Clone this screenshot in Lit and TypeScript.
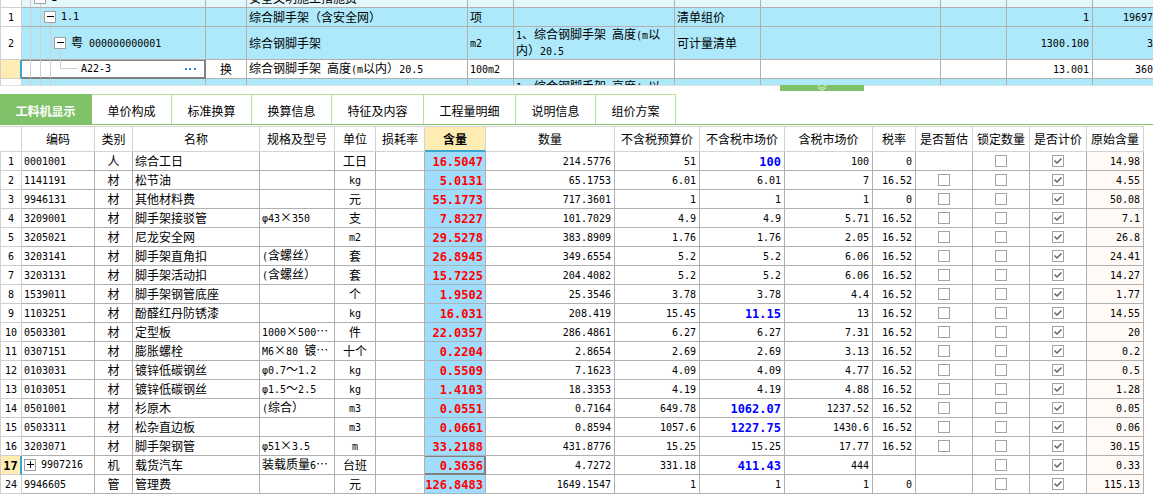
import { LitElement, html, css, svg, nothing } from "lit";
import { customElement } from "lit/decorators.js";

interface Item {
  no: string; code: string; kind: string; name: string; spec: string; unit: string;
  usage: string; qty: string; budget: string; market: string; taxed: string; rate: string; origin: string;
}

/* One line per resource; a market price marked with * has been adjusted by hand. */
const raw = `1|0001001|人|综合工日||工日|16.5047|214.5776|51|*100|100|0|14.98
2|1141191|材|松节油||kg|5.0131|65.1753|6.01|6.01|7|16.52|4.55
3|9946131|材|其他材料费||元|55.1773|717.3601|1|1|1|0|50.08
4|3209001|材|脚手架接驳管|φ43×350|支|7.8227|101.7029|4.9|4.9|5.71|16.52|7.1
5|3205021|材|尼龙安全网||m2|29.5278|383.8909|1.76|1.76|2.05|16.52|26.8
6|3203141|材|脚手架直角扣|(含螺丝）|套|26.8945|349.6554|5.2|5.2|6.06|16.52|24.41
7|3203131|材|脚手架活动扣|(含螺丝）|套|15.7225|204.4082|5.2|5.2|6.06|16.52|14.27
8|1539011|材|脚手架钢管底座||个|1.9502|25.3546|3.78|3.78|4.4|16.52|1.77
9|1103251|材|酚醛红丹防锈漆||kg|16.031|208.419|15.45|*11.15|13|16.52|14.55
10|0503301|材|定型板|1000×500⋯|件|22.0357|286.4861|6.27|6.27|7.31|16.52|20
11|0307151|材|膨胀螺栓|M6×80 镀⋯|十个|0.2204|2.8654|2.69|2.69|3.13|16.52|0.2
12|0103031|材|镀锌低碳钢丝|φ0.7～1.2|kg|0.5509|7.1623|4.09|4.09|4.77|16.52|0.5
13|0103051|材|镀锌低碳钢丝|φ1.5～2.5|kg|1.4103|18.3353|4.19|4.19|4.88|16.52|1.28
14|0501001|材|杉原木|(综合）|m3|0.0551|0.7164|649.78|*1062.07|1237.52|16.52|0.05
15|0503311|材|松杂直边板||m3|0.0661|0.8594|1057.6|*1227.75|1430.6|16.52|0.06
16|3203071|材|脚手架钢管|φ51×3.5|m|33.2188|431.8776|15.25|15.25|17.77|16.52|30.15
17|9907216|机|载货汽车|装载质量6⋯|台班|0.3636|4.7272|331.18|*411.43|444||0.33
24|9946605|管|管理费||元|126.8483|1649.1547|1|1|1|0|115.13`;

const items: Item[] = raw.split("\n").map((line) => {
  const [no, code, kind, name, spec, unit, usage, qty, budget, market, taxed, rate, origin] = line.split("|");
  return { no, code, kind, name, spec, unit, usage, qty, budget, market, taxed, rate, origin };
});

const columns: [string, string][] = [
  ["", "w22"], ["编码", "w73"], ["类别", "w38"], ["名称", "w127"], ["规格及型号", "w75"], ["单位", "w41"],
  ["损耗率", "w49"], ["含量", "w61"], ["数量", ""], ["不含税预算价", "w85"], ["不含税市场价", "w85"],
  ["含税市场价", "w88"], ["税率", "w43"], ["是否暂估", "w57"], ["锁定数量", "w57"], ["是否计价", "w57"], ["原始含量", "w57"],
];

const tabs = ["工料机显示", "单价构成", "标准换算", "换算信息", "特征及内容", "工程量明细", "说明信息", "组价方案"];

/** Latin letters and digits are set in the narrow monospace face, Chinese in the UI face. */
const mixed = (text: string) =>
  text.split(/([\x20-\x7eφ]+)/).filter(Boolean).map((part) =>
    /^[\x20-\x7eφ]/.test(part) ? html`<span class="latin">${part}</span>` : part);

const toggle = (open: boolean, label: string) => html`<button class="toggle" aria-label=${label}>
  <svg width="12" height="12" viewBox="0 0 12 12" shape-rendering="crispEdges" aria-hidden="true">
    <rect x="0.5" y="0.5" width="11" height="11" fill="#fff" stroke="#a0a0a0"/>
    <path d="M3 5.5h7" stroke="#000"/>${open ? nothing : svg`<path d="M6.5 2v7" stroke="#000"/>`}
  </svg></button>`;

/** Tree guide lines; the last one may run below the toggle that follows. */
const guides = (width: number, height: number, d: string) => html`<svg class="guides" width=${width} height=${height}
  fill="none" stroke="#cfcfcf" shape-rendering="crispEdges" aria-hidden="true"><path d=${d}/></svg>`;

@customElement("app-root")
export class AppRoot extends LitElement {
  static styles = css`
    :host {
      display: block;
      background: #fff;
      color: #000;
      font: 12px/14px "Noto Sans CJK SC", sans-serif;
    }
    * { box-sizing: border-box; }
    .latin { font-family: "DejaVu Sans Mono", monospace; font-size: 10px; white-space: pre-wrap; }
    table { border-collapse: separate; border-spacing: 0; table-layout: fixed; }
    td, th {
      padding: 0 2px;
      font-weight: 400;
      text-align: left;
      white-space: nowrap;
      overflow: hidden;
      border-right: 1px solid #b0b0b0;
      border-bottom: 1px solid #b0b0b0;
    }
    .center { text-align: center; }
    button { font: inherit; color: inherit; border: 0; padding: 0; background: none; }
    .toggle { display: inline-flex; flex: none; }
    .focus {
      border-color: #808080;
      box-shadow: inset -1px -1px #808080, inset 0 1px #808080;
    }

    .w22 { width: 22px; }
    .w38 { width: 38px; }
    .w41 { width: 41px; }
    .w43 { width: 43px; }
    .w46 { width: 46px; }
    .w49 { width: 49px; }
    .w57 { width: 57px; }
    .w60 { width: 60px; }
    .w61 { width: 61px; }
    .w66 { width: 66px; }
    .w73 { width: 73px; }
    .w75 { width: 75px; }
    .w85 { width: 85px; }
    .w86 { width: 86px; }
    .w88 { width: 88px; }
    .w127 { width: 127px; }
    .w161 { width: 161px; }
    .w184 { width: 184px; }
    .w221 { width: 221px; }

    .bill-pane { height: 86px; overflow: hidden; border-bottom: 1px solid #e0e0e0; }
    .bill { width: 100%; margin-top: -11px; }
    .bill tr { background: #ade9fb; }
    .bill .part { background: #e4f7fc; }
    .bill .norm { background: #fff; }
    .right { text-align: right; padding-right: 3px; }
    .bill td:last-child { border-right: 0; padding-right: 0; }
    td.rowno {
      padding: 0;
      background: #fff;
      text-align: center;
      border-left: 1px solid #d0d0d0;
      border-right-color: #d0d0d0;
      border-bottom-color: #d0d0d0;
    }
    td.current {
      background: #ffecb3;
      border-right: 2px solid #3aa6d0;
    }
    td.tree { padding: 0; }
    .node { display: flex; align-items: center; height: 18px; }
    .node.tall { height: 32px; }
    .guides { display: block; flex: none; overflow: visible; }
    .node .toggle { position: relative; margin-right: 5px; }
    .more { margin-left: auto; margin-right: 8px; display: flex; }
    td.wrap { white-space: normal; }

    .splitter { display: grid; grid-template-columns: 780fr 84px 289fr; height: 8px; }
    .splitter button {
      grid-column: 2;
      height: 6px;
      margin-top: -1px;
      background: #80c269;
      display: flex;
      justify-content: center;
    }

    .tabs { display: flex; border-bottom: 1px solid #80c269; }
    .tab {
      height: 30px;
      width: 80px;
      padding-top: 3px;
      border-top: 1px solid #b4e49c;
      border-right: 1px solid #b4e49c;
    }
    .tab.wide { width: 92px; }
    .tab.active { background: #80c269; color: #fff; font-weight: 700; border-color: #80c269; }

    .items { width: calc(100% - 9px); margin-top: 1px; }
    .items th {
      height: 26px;
      padding: 0;
      text-align: center;
      border-color: #d3d3d3;
      border-top: 1px solid #d3d3d3;
    }
    .items td { height: 19px; }
    .items th.picked {
      background: #ffecb3;
      border-bottom: 2px solid #3aa6d0;
      font-weight: 700;
    }
    td.usage { padding: 0 2px 0 0; background: #a0dcfb; color: #f00; }
    td.usage:not(.focus) { border-bottom-color: #a8b4ba; }
    .strong .latin { font-weight: 700; font-size: 12px; }
    .changed { color: #00f; }
    .origin { background: #fffaf5; }
    .code { display: flex; align-items: center; gap: 5px; }
    input {
      appearance: none;
      display: block;
      width: 12px;
      height: 12px;
      margin: 0 auto;
      border: 1px solid #a3a3a3;
      background: #fff;
    }
    input:checked {
      background: #fff url("data:image/svg+xml,%3Csvg xmlns='http://www.w3.org/2000/svg' viewBox='0 0 10 10'%3E%3Cpath d='M1.5 4.5L4 7L8.5 2.5' fill='none' stroke='%23606070' stroke-width='1.5'/%3E%3C/svg%3E");
    }
  `;

  private bill() {
    return html`<div class="bill-pane"><table class="bill">
      <colgroup>
        <col class="w22"><col class="w184"><col class="w41"><col class="w221">
        <col class="w46"><col class="w161"><col class="w86"><col>
        <col class="w66"><col class="w86"><col class="w60">
      </colgroup>
      <tbody>
        <tr class="part">
          <td class="rowno"></td>
          <td class="tree"><div class="node">${guides(12, 18, "M8.5 0V18M8 8.5H12M18.5 14V18")}${toggle(true, "折叠 1")}${mixed("1")}</div></td>
          <td></td><td>安全文明施工措施费</td><td></td><td></td><td></td><td></td><td></td><td></td><td></td>
        </tr>
        <tr>
          <td class="rowno">${mixed("1")}</td>
          <td class="tree"><div class="node">${guides(22, 18, "M8.5 0V18M18.5 0V18M18 8.5H22M28.5 14V18")}${toggle(true, "折叠 1.1")}${mixed("1.1")}</div></td>
          <td></td><td>综合脚手架（含安全网）</td><td>项</td><td></td><td>清单组价</td><td></td><td></td>
          <td class="right">${mixed("1")}</td><td class="right">${mixed("19697")}</td>
        </tr>
        <tr>
          <td class="rowno">${mixed("2")}</td>
          <td class="tree"><div class="node tall">${guides(32, 32, "M8.5 0V32M18.5 0V32M28.5 0V32M28 15.5H32M38.5 22V32")}${toggle(true, "折叠 粤 000000000001")}<span>${mixed("粤 000000000001")}</span></div></td>
          <td></td><td>综合钢脚手架</td><td>${mixed("m2")}</td>
          <td class="wrap">${mixed("1、综合钢脚手架 高度(m以内）20.5")}</td><td>可计量清单</td><td></td><td></td>
          <td class="right">${mixed("1300.100")}</td><td class="right">${mixed("3")}</td>
        </tr>
        <tr class="norm">
          <td class="rowno current"></td>
          <td class="tree focus"><div class="node">${guides(59, 18, "M8.5 0V18M18.5 0V18M28.5 0V18M38.5 0V9M38 8.5H56")}${mixed("A22-3")}
            <button class="more" aria-label="更多"><svg width="12" height="4" viewBox="0 0 12 4" fill="#2f86d0" shape-rendering="crispEdges" aria-hidden="true"><path d="M0 1h2v2H0zM4 1h2v2H4zM9 1h2v2H9z"/></svg></button></div></td>
          <td class="center">换</td><td>${mixed("综合钢脚手架 高度(m以内）20.5")}</td><td>${mixed("100m2")}</td>
          <td></td><td></td><td></td><td></td>
          <td class="right">${mixed("13.001")}</td><td class="right">${mixed("360")}</td>
        </tr>
        <tr>
          <td class="rowno"></td>
          <td class="tree"><div class="node tall">${guides(32, 32, "M8.5 0V32M18.5 0V32M28.5 0V32")}</div></td>
          <td></td><td></td><td></td>
          <td class="wrap">${mixed("1、综合钢脚手架 高度(m以内）20.5")}</td>
          <td></td><td></td><td></td><td></td><td></td>
        </tr>
      </tbody></table></div>`;
  }

  private row(r: Item) {
    const active = r.no === "17";
    const changed = r.market.startsWith("*");
    const estimable = r.kind === "材";
    return html`<tr>
      <td class="rowno ${active ? "current strong" : ""}">${mixed(r.no)}</td>
      <td>${active ? html`<div class="code">${toggle(false, "展开 " + r.code)}${mixed(r.code)}</div>` : mixed(r.code)}</td>
      <td class="center">${r.kind}</td>
      <td>${r.name}</td>
      <td>${mixed(r.spec)}</td>
      <td class="center">${mixed(r.unit)}</td>
      <td></td>
      <td class="right usage strong ${active ? "focus" : ""}">${mixed(r.usage)}</td>
      <td class="right">${mixed(r.qty)}</td>
      <td class="right">${mixed(r.budget)}</td>
      <td class="right ${changed ? "changed strong" : ""}">${mixed(r.market.replace("*", ""))}</td>
      <td class="right">${mixed(r.taxed)}</td>
      <td class="right">${mixed(r.rate)}</td>
      <td>${estimable ? html`<input type="checkbox" aria-label="是否暂估 ${r.code}">` : nothing}</td>
      <td><input type="checkbox" aria-label="锁定数量 ${r.code}"></td>
      <td><input type="checkbox" aria-label="是否计价 ${r.code}" checked></td>
      <td class="right origin">${mixed(r.origin)}</td>
    </tr>`;
  }

  render() {
    return html`${this.bill()}
      <div class="splitter"><button aria-label="折叠面板">
        <svg width="10" height="6" viewBox="0 0 10 6" fill="none" stroke="#e2f3dc" aria-hidden="true"><path d="M1 0l4 3.5L9 0M1 2.5l4 3L9 2.5"/></svg>
      </button></div>
      <div class="tabs" role="tablist">${tabs.map((t, i) => html`<button role="tab" aria-selected=${i === 0}
        class="tab ${i === 0 ? "active" : ""} ${t.length > 4 ? "wide" : ""}">${t}</button>`)}</div>
      <table class="items">
        <colgroup>${columns.map(([, w]) => html`<col class=${w}>`)}</colgroup>
        <thead><tr>${columns.map(([c]) => html`<th class=${c === "含量" ? "picked" : ""}>${c}</th>`)}</tr></thead>
        <tbody>${items.map((r) => this.row(r))}</tbody>
      </table>`;
  }
}
